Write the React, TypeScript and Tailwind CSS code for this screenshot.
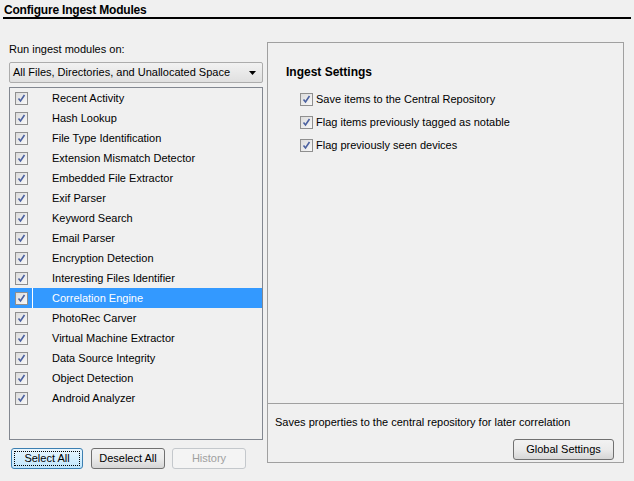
import React from "react";

const modules = [
  "Recent Activity",
  "Hash Lookup",
  "File Type Identification",
  "Extension Mismatch Detector",
  "Embedded File Extractor",
  "Exif Parser",
  "Keyword Search",
  "Email Parser",
  "Encryption Detection",
  "Interesting Files Identifier",
  "Correlation Engine",
  "PhotoRec Carver",
  "Virtual Machine Extractor",
  "Data Source Integrity",
  "Object Detection",
  "Android Analyzer",
];

const settings = [
  "Save items to the Central Repository",
  "Flag items previously tagged as notable",
  "Flag previously seen devices",
];

function Check() {
  return (
    <span className="flex h-[13px] w-[13px] shrink-0 items-center justify-center border border-[#8f8f8f] bg-gradient-to-br from-[#dcdcdc] to-[#f8f8f8]">
      <svg width="9" height="9" viewBox="0 0 9 9">
        <path d="M1.5 4.5 L3.5 7 L7.5 1" fill="none" stroke="#4b61a0" strokeWidth="1.6" />
      </svg>
    </span>
  );
}

function Button({
  label,
  width,
  variant = "normal",
}: {
  label: string;
  width: string;
  variant?: "normal" | "focus" | "disabled";
}) {
  if (variant === "disabled") {
    return (
      <div className={`flex h-[21px] ${width} items-center justify-center rounded-[3px] border border-[#c4c8cc] bg-[#f4f4f4] text-[#a0a0a0]`}>
        {label}
      </div>
    );
  }
  if (variant === "focus") {
    return (
      <div className={`flex h-[21px] ${width} items-center justify-center rounded-[3px] border border-[#3c7fb1] bg-gradient-to-b from-[#eaf6fd] to-[#bee6fd] p-[2px]`}>
        <div className="flex h-full w-full items-center justify-center border border-dotted border-black">
          {label}
        </div>
      </div>
    );
  }
  return (
    <div className={`flex h-[21px] ${width} items-center justify-center rounded-[3px] border border-[#707070] bg-gradient-to-b from-[#f2f2f2] via-[#ebebeb] to-[#d6d6d6]`}>
      {label}
    </div>
  );
}

export default function App() {
  return (
    <div className="h-[481px] w-[634px] bg-[#f0f0f0] font-['Liberation_Sans',sans-serif] text-[11px] leading-[13px] text-black">
      <div className="px-[3px] pt-[4px]">
        <div className="h-[15px] border-b-2 border-black pl-[1px] text-[12px] font-bold leading-[13px] tracking-[-0.2px]">
          Configure Ingest Modules
        </div>
      </div>

      <div className="flex gap-[4px] pl-[9px] pt-[23px]">
        <div className="flex w-[254px] flex-col">
          <div className="pt-[1px]">Run ingest modules on:</div>
          <div className="mt-[6px] flex h-[21px] items-center justify-between rounded-[2px] border border-[#acacac] bg-gradient-to-b from-[#f2f2f2] to-[#e0e0e0] pl-[3px] pr-[6px]">
            <span>All Files, Directories, and Unallocated Space</span>
            <svg width="7" height="4" viewBox="0 0 7 4">
              <path d="M0 0 H7 L3.5 4 Z" fill="#000" />
            </svg>
          </div>
          <div className="mt-[4px] h-[353px] border border-[#828790] bg-[#f0f0f0]">
            {modules.map((m) => {
              const selected = m === "Correlation Engine";
              return (
                <div
                  key={m}
                  className={`flex h-[20px] items-center ${selected ? "bg-[#3399ff] text-white" : ""}`}
                >
                  <div className={`flex h-full w-[23px] items-center justify-center border-r ${selected ? "border-white" : "border-transparent"}`}>
                    <Check />
                  </div>
                  <span className="pl-[19px]">{m}</span>
                </div>
              );
            })}
          </div>
          <div className="mt-[8px] flex pl-[2px]">
            <Button label="Select All" width="w-[72px]" variant="focus" />
            <div className="w-[8px]" />
            <Button label="Deselect All" width="w-[74px]" />
            <div className="w-[7px]" />
            <Button label="History" width="w-[74px]" variant="disabled" />
          </div>
        </div>

        <div className="flex h-[421px] w-[357px] flex-col border border-[#a0a0a0]">
          <div className="flex-1 pl-[18px] pt-[23px]">
            <div className="text-[12px] font-bold">Ingest Settings</div>
            <div className="mt-[14px] flex flex-col gap-[10px] pl-[14px]">
              {settings.map((s) => (
                <div key={s} className="flex h-[13px] items-center gap-[3px]">
                  <Check />
                  <span>{s}</span>
                </div>
              ))}
            </div>
          </div>
          <div className="h-[59px] border-t border-[#a0a0a0] px-[7px] pt-[12px]">
            <div>Saves properties to the central repository for later correlation</div>
            <div className="mt-[10px] flex justify-end pr-[2px]">
              <Button label="Global Settings" width="w-[101px]" />
            </div>
          </div>
        </div>
      </div>
    </div>
  );
}
